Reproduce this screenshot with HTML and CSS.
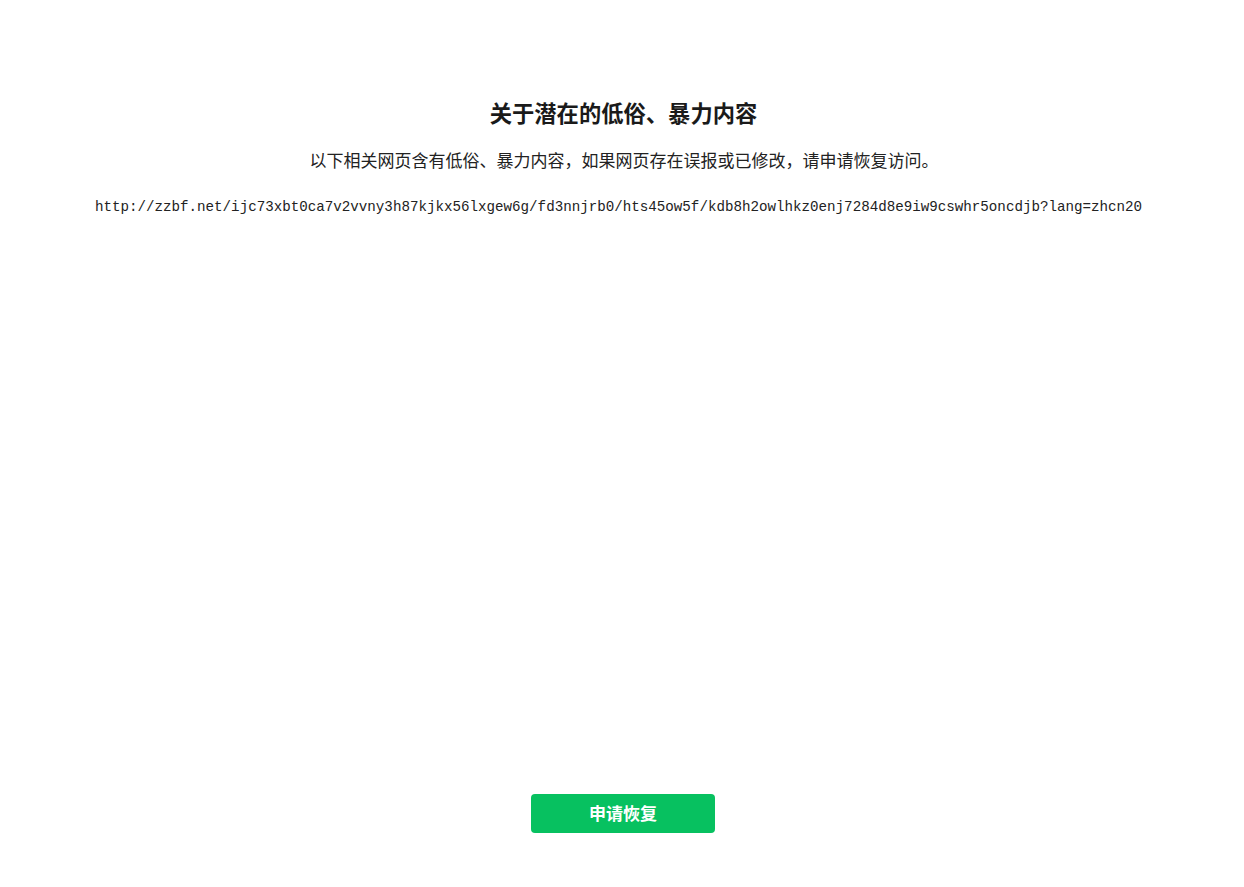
FILE: index.html
```html
<!DOCTYPE html>
<html lang="zh-CN">
<head>
<meta charset="utf-8">
<title>关于潜在的低俗、暴力内容</title>
<link rel="stylesheet" href="styles.css">
</head>
<body>
<div class="page">
  <div class="content">
    <h1 class="title">关于潜在的低俗、暴力内容</h1>
    <p class="desc">以下相关网页含有低俗、暴力内容，如果网页存在误报或已修改，请申请恢复访问。</p>
    <p class="url">http://zzbf.net/ijc73xbt0ca7v2vvny3h87kjkx56lxgew6g/fd3nnjrb0/hts45ow5f/kdb8h2owlhkz0enj7284d8e9iw9cswhr5oncdjb?lang=zhcn20</p>
  </div>
  <div class="actions">
    <button class="btn">申请恢复</button>
  </div>
</div>
</body>
</html>
```
FILE: styles.css
```css
html, body {
  margin: 0;
  padding: 0;
  background: #ffffff;
}
.page {
  min-height: 887px;
  height: 100vh;
  display: flex;
  flex-direction: column;
  box-sizing: border-box;
  padding: 97px 0 54px;
}
.content {
  flex: 1;
  display: flex;
  flex-direction: column;
  align-items: center;
  text-align: center;
}
.title {
  margin: 0 0 0 3px;
  font-family: "Noto Sans CJK SC", sans-serif;
  font-size: 22.3px;
  font-weight: 700;
  line-height: 30px;
  color: #1a1a1a;
}
.desc {
  margin: 21px 0 0 4px;
  font-family: "Noto Sans CJK SC", sans-serif;
  font-size: 17px;
  line-height: 24px;
  color: #222222;
}
.url {
  margin: 25px 0 0 -7px;
  font-family: "Liberation Mono", monospace;
  font-size: 14.2px;
  line-height: 20px;
  color: #222222;
}
.actions {
  display: flex;
  justify-content: center;
  padding-left: 2px;
}
.btn {
  width: 184px;
  height: 39px;
  border: none;
  border-radius: 4px;
  background: #07c160;
  color: #ffffff;
  font-family: "Noto Sans CJK SC", sans-serif;
  font-size: 17px;
  font-weight: 700;
  padding: 0 0 3px;
}
```
